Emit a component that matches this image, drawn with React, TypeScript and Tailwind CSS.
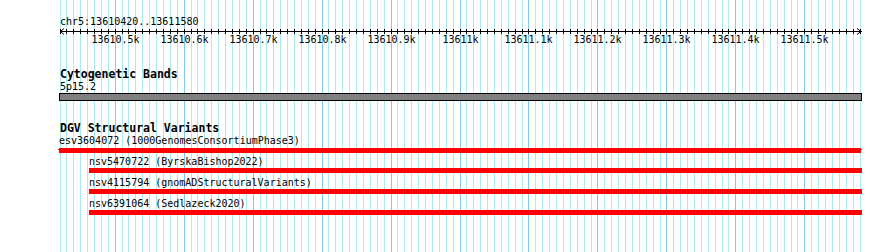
import React from "react";

const START = 13610420;
const END = 13611580;
const LEFT = 60;
const WIDTH = 800;
const STEPS = (END - START) / 10;

// pixel x for a base position
const px = (bp: number) => LEFT + ((bp - START) / (END - START)) * WIDTH;
const col = (bp: number) => Math.floor(px(bp)) + 0.5;

const gridBps = Array.from({ length: STEPS + 1 }, (_, i) => START + i * 10);

const features = [
  { name: "esv3604072", source: "1000GenomesConsortiumPhase3", start: 13610400, gap: "mt-0", offscreen: true },
  { name: "nsv5470722", source: "ByrskaBishop2022", start: 13610462, gap: "mt-[3px]", offscreen: false },
  { name: "nsv4115794", source: "gnomADStructuralVariants", start: 13610462, gap: "mt-[4px]", offscreen: false },
  { name: "nsv6391064", source: "Sedlazeck2020", start: 13610462, gap: "mt-[4px]", offscreen: false },
];

function Grid() {
  return (
    <svg className="absolute inset-0" width={890} height={252} shapeRendering="crispEdges">
      {gridBps.map((bp) => (
        <line
          key={bp}
          x1={col(bp)}
          x2={col(bp)}
          y1={0}
          y2={252}
          stroke={bp % 100 === 0 ? "#80c8f0" : "#aaeaf0"}
          strokeWidth={1}
        />
      ))}
    </svg>
  );
}

function Ruler() {
  const majors = gridBps.filter((bp) => bp % 100 === 0);
  const label = (bp: number) => {
    const k = bp / 1000;
    return (Number.isInteger(k) ? k.toFixed(0) : k.toFixed(1)) + "k";
  };
  return (
    <svg width={890} height={20} className="block" shapeRendering="crispEdges">
      <line x1={60} x2={862} y1={3.5} y2={3.5} stroke="#000" />
      {gridBps.map((bp) => (
        <line key={bp} x1={col(bp)} x2={col(bp)} y1={1} y2={6} stroke="#000" />
      ))}
      <g shapeRendering="auto" stroke="#000" strokeWidth={1} fill="none">
        <polyline points="64,0.5 60.5,3.5 64,6.5" />
        <polyline points="857,0.5 861,3.5 857,6.5" />
      </g>
      {majors.map((bp) => (
        <text
          key={bp}
          x={col(bp)}
          y={15}
          textAnchor="middle"
          fontSize={10}
          fontFamily="'DejaVu Sans Mono', monospace"
          fill="#000"
        >
          {label(bp)}
        </text>
      ))}
    </svg>
  );
}

export default function App() {
  return (
    <div className="relative w-[890px] h-[252px] overflow-hidden bg-white font-['DejaVu_Sans_Mono',monospace] text-black">
      <Grid />

      <div className="relative">
        <div className="pl-[60px] pt-[16px] text-[10px] leading-[12px]">chr5:13610420..13611580</div>
        <Ruler />

        {/* Cytogenetic bands */}
        <div className="mt-[19px] pl-[60px] text-[11.5px] leading-[14px] font-bold">Cytogenetic Bands</div>
        <div className="pl-[60px] text-[10px] leading-[12px]">5p15.2</div>
        <div className="ml-[59px] h-[8px] w-[803px] border border-black bg-[#808080]" />

        {/* DGV structural variants */}
        <div className="mt-[21px] pl-[60px] text-[11.5px] leading-[13px] font-bold">DGV Structural Variants</div>
        <div className="flex flex-col">
          {features.map((f) => {
            const left = Math.max(px(f.start), 59);
            return (
              <div key={f.name} className={f.gap}>
                <div className="text-[10px] leading-[12px] whitespace-pre" style={{ paddingLeft: Math.round(left) }}>
                  {f.name} ({f.source})
                </div>
                <div className={f.offscreen ? "relative mt-px flex items-center" : "flex items-center"}>
                  <div style={{ width: Math.round(left) }} />
                  {f.offscreen && <div className="-ml-px h-px w-px bg-[#ff0000] self-start mt-[1px]" />}
                  <div className="h-[5px] bg-[#ff0000]" style={{ width: 862 - Math.round(left) - (f.offscreen ? 1 : 0) }} />
                  {f.offscreen && <div className="h-px w-px bg-[#ff0000] self-start mt-[1px]" />}
                </div>
              </div>
            );
          })}
        </div>
      </div>
    </div>
  );
}
